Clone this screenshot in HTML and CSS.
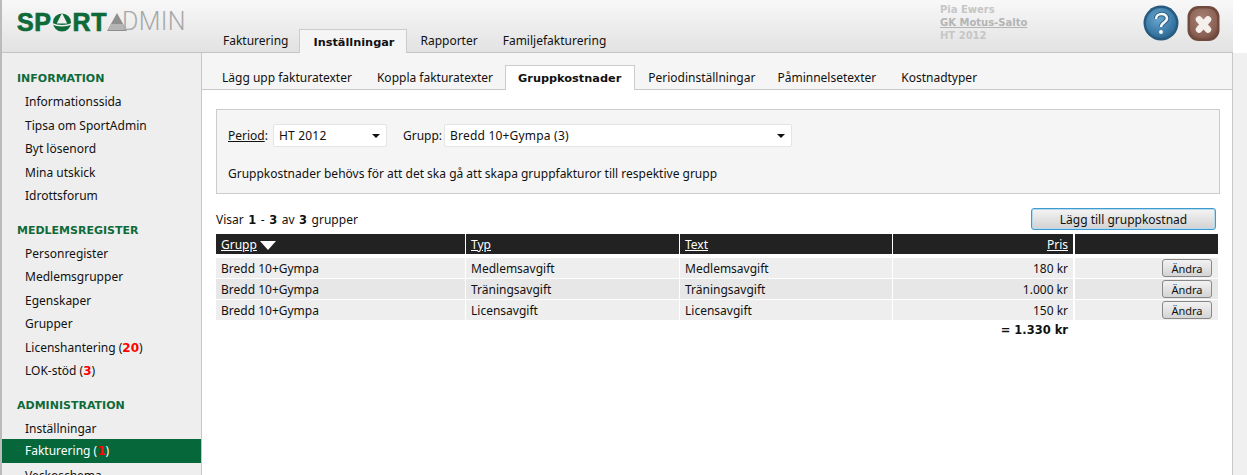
FILE: index.html
```html
<!DOCTYPE html>
<html lang="sv">
<head>
<meta charset="utf-8">
<title>SportAdmin</title>
<link rel="stylesheet" href="styles.css">
</head>
<body>
<div class="page">
  <header class="top">
    <div class="logo">
      <span class="logo-bold">SP</span><svg class="logo-o" viewBox="0 0 20 20"><circle cx="10" cy="10" r="9.500" fill="#0f6a3a"/><path d="M10 0L4.500 11h11z" fill="#efefef"/><path d="M0 11.500C5 14 15 14 20 11.500" fill="none" stroke="#efefef" stroke-width="1.500"/></svg><span class="logo-bold">RT</span><span class="logo-rest"><svg class="logo-a" viewBox="0 0 20 18"><path d="M10 0L20 18H0z" fill="#8f8f8f"/><path d="M4 11h12l3 6H1z" fill="#b5b5b5"/></svg><span class="logo-thin">DMIN</span></span>
    </div>
    <nav class="main-tabs">
      <a class="main-tab">Fakturering</a>
      <a class="main-tab active">Inställningar</a>
      <a class="main-tab">Rapporter</a>
      <a class="main-tab">Familjefakturering</a>
    </nav>
    <div class="user">
      <div>Pia Ewers</div>
      <div class="user-link">GK Motus-Salto</div>
      <div>HT 2012</div>
    </div>
    <div class="top-icons">
      <svg class="icon-help" viewBox="0 0 36 36"><defs><radialGradient id="h" cx="42%" cy="35%" r="65%"><stop offset="0" stop-color="#6aa6cf"/><stop offset=".75" stop-color="#3c7ba8"/><stop offset="1" stop-color="#2f6a94"/></radialGradient></defs><circle cx="18" cy="18" r="17.500" fill="#275a7e"/><circle cx="18" cy="18" r="15" fill="url(#h)"/><path d="M13 14c0-6.500 11-6.500 11-.5 0 4-6 4-6 8.500" fill="none" stroke="#2b5f85" stroke-width="4.500"/><path d="M13 14c0-6.500 11-6.500 11-.5 0 4-6 4-6 8.500" fill="none" stroke="#f2f7fa" stroke-width="2.600"/><circle cx="18" cy="27" r="2" fill="#f2f7fa"/></svg>
      <svg class="icon-close" viewBox="0 0 33 36"><defs><radialGradient id="c" cx="45%" cy="35%" r="70%"><stop offset="0" stop-color="#a88276"/><stop offset=".8" stop-color="#8a6154"/><stop offset="1" stop-color="#775043"/></radialGradient></defs><rect x=".5" y="1" width="32" height="35" rx="11" fill="#704a3e"/><rect x="3" y="3.500" width="27" height="30" rx="9" fill="url(#c)"/><path d="M12 14.500l9 10M21 14.500l-9 10" fill="none" stroke="#f6f0ec" stroke-width="6.500" stroke-linecap="round"/></svg>
    </div>
  </header>
  <div class="body">
    <aside class="side">
      <h3 class="side-head">INFORMATION</h3>
      <a class="side-item">Informationssida</a>
      <a class="side-item">Tipsa om SportAdmin</a>
      <a class="side-item">Byt lösenord</a>
      <a class="side-item">Mina utskick</a>
      <a class="side-item">Idrottsforum</a>
      <h3 class="side-head">MEDLEMSREGISTER</h3>
      <a class="side-item">Personregister</a>
      <a class="side-item">Medlemsgrupper</a>
      <a class="side-item">Egenskaper</a>
      <a class="side-item">Grupper</a>
      <a class="side-item">Licenshantering (<b class="count">20</b>)</a>
      <a class="side-item">LOK-stöd (<b class="count">3</b>)</a>
      <h3 class="side-head">ADMINISTRATION</h3>
      <a class="side-item">Inställningar</a>
      <a class="side-item current">Fakturering (<b class="count">1</b>)</a>
      <a class="side-item">Veckoschema</a>
    </aside>
    <main class="main">
      <nav class="sub-tabs">
        <a class="sub-tab">Lägg upp fakturatexter</a>
        <a class="sub-tab">Koppla fakturatexter</a>
        <a class="sub-tab active">Gruppkostnader</a>
        <a class="sub-tab">Periodinställningar</a>
        <a class="sub-tab">Påminnelsetexter</a>
        <a class="sub-tab">Kostnadtyper</a>
      </nav>
      <div class="content">
        <section class="filter">
          <div class="filter-row">
            <span><u>Period</u>:</span>
            <span class="select select-period">HT 2012<i class="arrow"></i></span>
            <span class="grupp-label">Grupp:</span>
            <span class="select select-grupp">Bredd 10+Gympa (3)<i class="arrow"></i></span>
          </div>
          <p class="filter-note">Gruppkostnader behövs för att det ska gå att skapa gruppfakturor till respektive grupp</p>
        </section>
        <div class="list-bar">
          <span class="list-count">Visar <b>1</b> - <b>3</b> av <b>3</b> grupper</span>
          <button class="add-btn">Lägg till gruppkostnad</button>
        </div>
        <table class="grid">
          <colgroup><col class="c1"><col class="c2"><col class="c3"><col class="c4"><col></colgroup>
          <thead>
            <tr><th><u>Grupp</u><i class="sort"></i></th><th><u>Typ</u></th><th><u>Text</u></th><th class="num"><u>Pris</u></th><th></th></tr>
          </thead>
          <tbody>
            <tr class="spacer"><td colspan="5"></td></tr>
            <tr><td>Bredd 10+Gympa</td><td>Medlemsavgift</td><td>Medlemsavgift</td><td class="num">180 kr</td><td class="act"><button class="edit">Ändra</button></td></tr>
            <tr class="alt"><td>Bredd 10+Gympa</td><td>Träningsavgift</td><td>Träningsavgift</td><td class="num">1.000 kr</td><td class="act"><button class="edit">Ändra</button></td></tr>
            <tr><td>Bredd 10+Gympa</td><td>Licensavgift</td><td>Licensavgift</td><td class="num">150 kr</td><td class="act"><button class="edit">Ändra</button></td></tr>
          </tbody>
          <tfoot>
            <tr><td colspan="3"></td><td class="num total">= 1.330 kr</td><td></td></tr>
          </tfoot>
        </table>
      </div>
    </main>
    <div class="strip"></div>
  </div>
</div>
</body>
</html>
```
FILE: styles.css
```css
* { box-sizing: border-box; }
html, body { margin: 0; height: 100%; overflow: hidden; background: #fff; }
body { font-family: "Noto Sans", "DejaVu Sans", sans-serif; font-size: 12px; color: #111; }
b { font-family: "DejaVu Sans", sans-serif; font-size: 11.5px; font-weight: 700; }
.page { height: 475px; display: flex; flex-direction: column; border-left: 2px solid #bbb; }
.top { height: 53px; flex: none; display: flex; position: relative; background: linear-gradient(#f8f8f8, #e2e2e2); border-bottom: 1px solid #c4c4c4; margin-right: 14px; padding-left: 15px; }
.logo { width: 193px; flex: none; height: 26px; margin-top: 9px; display: flex; align-items: center; color: #0f6a3a; }
.logo-bold { font-family: "Liberation Sans", sans-serif; font-weight: 700; font-size: 25px; letter-spacing: .6px; line-height: 26px; -webkit-text-stroke: .7px #0f6a3a; }
.logo-o { width: 20px; height: 19px; margin: 0 1px 0 0; }
.logo-rest { display: flex; align-items: center; }
.logo-a { width: 20px; height: 18px; }
.logo-thin { color: #a8a8a8; font-family: "Roboto", sans-serif; font-size: 25px; font-weight: 300; margin-left: -5px; letter-spacing: .3px; line-height: 26px; }
.main-tabs { display: flex; align-items: flex-end; margin-bottom: -1px; height: 53px; }
.main-tab { padding: 0 13px; height: 24px; line-height: 24px; margin-top: 29px; color: #111; white-space: nowrap; }
.main-tab.active { font-family: "DejaVu Sans", sans-serif; font-size: 11.3px; font-weight: 700; background: #f5f5f5; border: 1px solid #ccc; border-bottom: 0; line-height: 25px; margin-left: -2px; padding-right: 12px; }
.main-tab:last-child { margin-left: -1px; }
.user { position: absolute; left: 938px; top: 3px; font-family: "DejaVu Sans", sans-serif; font-weight: 700; font-size: 10px; line-height: 13px; color: #c6c6c6; }
.user-link { text-decoration: underline; color: #b4b4b4; }
.top-icons { position: absolute; left: 1141px; top: 5px; display: flex; gap: 8px; }
.icon-help { width: 36px; height: 36px; }
.icon-close { width: 33px; height: 36px; }
.body { flex: 1; display: flex; min-height: 0; }
.side { width: 200px; flex: none; background: #eee; border-right: 1px solid #c8c8c8; padding-top: 17px; overflow: hidden; }
.side-head { margin: 0 0 2px; padding-left: 15px; height: 18px; line-height: 18px; font-family: "DejaVu Sans", sans-serif; font-size: 11px; font-weight: 700; color: #0f6a3a; }
.side-item { display: block; height: 23.5px; line-height: 23px; padding-left: 23px; color: #111; }
.side-item + .side-head { margin-top: 14px; }
.side-item.current { background: #05673a; color: #fff; height: 24px; line-height: 24px; margin: -1px 0 1px; }
.count { color: #f00; font-size: 12px; }
.main { width: 1030px; flex: none; display: flex; flex-direction: column; }
.sub-tabs { height: 37px; background: #f5f5f5; border-bottom: 1px solid #c8c8c8; display: flex; padding: 12px 0 0 7px; flex: none; }
.sub-tab { padding: 0 13px; height: 25px; line-height: 25px; white-space: nowrap; margin-left: -1px; }
.sub-tab:first-child { margin-left: 0; }
.sub-tab:nth-child(4) { margin-left: 0; }
.sub-tab:nth-child(5) { margin-left: -4px; }
.sub-tab.active { font-family: "DejaVu Sans", sans-serif; font-size: 11.3px; background: #fff; font-weight: 700; border: 1px solid #ccc; border-bottom: 0; height: 25px; padding-left: 12px; }
.content { padding: 19px 12px 0 14px; }
.filter { height: 85px; background: #f5f5f5; border: 1px solid #ccc; padding: 14px 11px 0; }
.filter-row { display: flex; align-items: flex-start; height: 24px; line-height: 24px; }
.select { background: #fff; border: 1px solid #e4e4e4; border-radius: 2px; height: 23px; line-height: 22px; padding-left: 5px; letter-spacing: .2px; position: relative; display: block; margin-left: 5px; }
.select-period { width: 114px; }
.select-grupp { width: 348px; margin-left: 2px; }
.grupp-label { margin-left: 16px; }
.arrow { position: absolute; right: 6px; top: 9px; border: 4px solid transparent; border-top: 4px solid #111; }
.filter-note { margin: 18px 0 0; line-height: 16px; white-space: nowrap; }
.list-bar { display: flex; justify-content: space-between; align-items: center; height: 22px; margin-top: 14px; padding-right: 4px; }
.list-count { word-spacing: 1.4px; }
.add-btn { font: inherit; color: #111; width: 185px; height: 22px; padding: 0; border: 1px solid #3d9bd0; border-radius: 3px; box-shadow: inset 0 0 0 1px #b5daf0; background: linear-gradient(#f4f4f4, #d2d2d2); }
.grid { width: 1002px; margin-top: 4px; border-collapse: separate; border-spacing: 0; table-layout: fixed; }
.c1 { width: 250px; } .c2 { width: 214px; } .c3 { width: 213px; } .c4 { width: 182px; }
th { height: 20px; padding: 0 5px; background: #222; color: #fff; text-align: left; font-weight: 400; border-right: 1px solid #fff; }
th:nth-child(4), tbody td:nth-child(4) { border-right-width: 2px; }
th:last-child, tbody td:last-child { border-right: 0; }
.sort { display: inline-block; margin-left: 3px; border: 8.5px solid transparent; border-top: 9px solid #fff; border-bottom: 0; vertical-align: -1px; }
.spacer td { height: 4px; padding: 0; background: #fff; border: 0; }
tbody td { height: 21px; padding: 0 5px; background: #eee; border-right: 1px solid #fff; border-bottom: 1px solid #fff; white-space: nowrap; }
tbody tr.alt td { background: #e7e7e7; }
.num { text-align: right; }
.act { text-align: right; padding-right: 6px; }
.edit { font: inherit; font-size: 11px; color: #111; width: 50px; height: 18px; padding: 0; border: 1px solid #888; border-radius: 3px; background: linear-gradient(#f2f2f2, #d4d4d4); display: block; margin-left: auto; }
tfoot td { padding: 0; height: 17px; }
.total { font-family: "DejaVu Sans", sans-serif; font-size: 11.5px; font-weight: 700; line-height: 16px; padding: 1px 7px 0 0; }
.strip { flex: 1; background: #f0f0f0; border-left: 1px solid #c8c8c8; }
```
